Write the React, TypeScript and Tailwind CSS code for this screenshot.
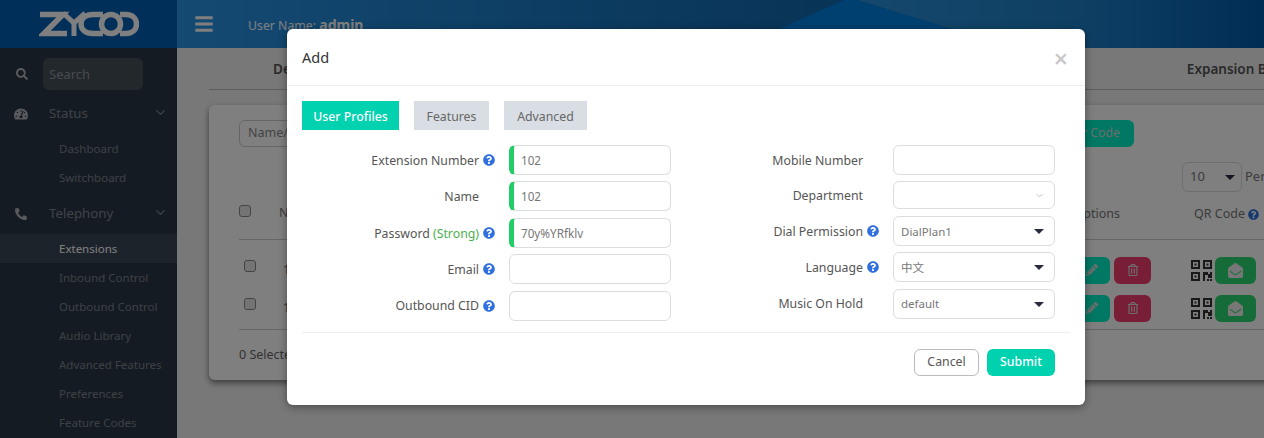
import React from "react";
import { ChevronDown } from "lucide-react";
import {
  FaBars,
  FaEnvelopeOpen,
  FaPencilAlt,
  FaPhone,
  FaQuestionCircle,
  FaRegTrashAlt,
  FaSearch,
  FaTachometerAlt,
} from "react-icons/fa";

const font = { fontFamily: '"Noto Sans", "Noto Sans CJK SC", sans-serif' };

function Logo() {
  return (
    <svg width="100" height="26" viewBox="0 0 100 26" fill="none" stroke="#fff" strokeWidth="5.500">
      <path d="M1 3.500H24L5 22.500H28" />
      <path d="M24 2L35 12L46 2M35 12V25" strokeWidth="5" />
      <path d="M64 3.500H54C47 3.500 42 7 42 13C42 19 47 22.500 54 22.500H64" />
      <circle cx="72" cy="13" r="9.500" />
      <path d="M81 3.500H87C94 3.500 97.500 8 97.500 13C97.500 18 94 22.500 87 22.500H81" />
    </svg>
  );
}

function QrIcon() {
  return (
    <svg width="21" height="21" viewBox="0 0 21 21" fill="#333">
      <path d="M0 0H9V9H0ZM2 2V7H7V2ZM3.500 3.500H5.500V5.500H3.500Z" fillRule="evenodd" />
      <path d="M12 0H21V9H12ZM14 2V7H19V2ZM15.500 3.500H17.500V5.500H15.500Z" fillRule="evenodd" />
      <path d="M0 12H9V21H0ZM2 14V19H7V14ZM3.500 15.500H5.500V17.500H3.500Z" fillRule="evenodd" />
      <path d="M12 12H17V14H19V12H21V18H17V15H14V21H12ZM16 19H18V21H16ZM19 19H21V21H19Z" />
    </svg>
  );
}

function HeaderDecoration() {
  return (
    <svg className="absolute top-0 left-0" width="1087" height="48" viewBox="0 0 1087 48">
      <defs>
        <linearGradient id="fade" x1="0" x2="1" y1="0" y2="0">
          <stop offset="0" stopColor="#2890d8" />
          <stop offset="0.55" stopColor="#1e80c8" />
          <stop offset="1" stopColor="#005aa8" />
        </linearGradient>
      </defs>
      <polygon points="680,0 1087,0 1087,48 836,48" fill="url(#fade)" />
      <polygon points="667,0 680,0 836,48 559,48" fill="#0080e0" />
    </svg>
  );
}

function SubItem({ label, active }: { label: string; active?: boolean }) {
  return (
    <div
      className={`flex h-[29px] items-center pl-[59px] text-[11.500px] ${
        active ? "bg-[#3a4656] text-white" : "text-[#7a838d]"
      }`}
    >
      {label}
    </div>
  );
}

function GroupItem({ icon, label }: { icon: React.ReactNode; label: string }) {
  return (
    <div className="flex h-[30px] items-center text-[13.300px] text-[#7f8790]">
      <span className="flex w-[49px] justify-center pr-[7px] text-[#b0b5bb]">{icon}</span>
      <span>{label}</span>
      <ChevronDown size={15} className="mt-[-4px] mr-[9px] ml-auto" />
    </div>
  );
}

function Sidebar() {
  return (
    <aside className="flex w-[177px] shrink-0 flex-col bg-[#2b3744]">
      <div className="flex h-12 items-center justify-center bg-[#0060b4]">
        <Logo />
      </div>
      <div className="mt-[10px] flex items-center">
        <span className="flex w-[43px] justify-center text-[#b0b5bb]">
          <FaSearch size={12} />
        </span>
        <div className="flex h-[32px] w-[100px] items-center rounded-md bg-[#47505a] pt-[1px] pl-[6px] text-[13px] text-[#8f97a1]">
          Search
        </div>
      </div>
      <div className="mt-[9px]">
        <GroupItem icon={<FaTachometerAlt size={14} />} label="Status" />
      </div>
      <div className="mt-[5px]">
        <SubItem label="Dashboard" />
        <SubItem label="Switchboard" />
      </div>
      <div className="mt-[7px]">
        <GroupItem icon={<FaPhone size={12} className="scale-x-[-1]" />} label="Telephony" />
      </div>
      <div className="mt-[5px]">
        <SubItem label="Extensions" active />
        <SubItem label="Inbound Control" />
        <SubItem label="Outbound Control" />
        <SubItem label="Audio Library" />
        <SubItem label="Advanced Features" />
        <SubItem label="Preferences" />
        <SubItem label="Feature Codes" />
      </div>
    </aside>
  );
}

function SelectArrow() {
  return (
    <svg width="10" height="5" viewBox="0 0 10 5" className="shrink-0">
      <polygon points="0,0 10,0 5,5" fill="#2b2b40" />
    </svg>
  );
}

function TableRow() {
  return (
    <div className="flex h-[38px] items-center">
      <span className="mb-[8px] ml-[5px] h-3 w-3 rounded-[3px] border border-[#888] bg-[#e8e8e8]" />
      <span className="ml-[27px] text-[12.500px] text-[#666]">102</span>
      <div className="mr-[23px] ml-auto flex items-center">
        <span className="flex h-[27px] w-[37px] items-center justify-center rounded-md bg-[#00f0c8] text-[#ddd]">
          <FaPencilAlt size={12} />
        </span>
        <span className="ml-[4px] flex h-[27px] w-[37px] items-center justify-center rounded-md bg-[#f03c6c] text-[#ddd]">
          <FaRegTrashAlt size={12} />
        </span>
        <span className="ml-[40px]">
          <QrIcon />
        </span>
        <span className="ml-[3px] flex h-[27px] w-[41px] items-center justify-center rounded-md bg-[#2cd870] text-[#eee]">
          <FaEnvelopeOpen size={15} />
        </span>
      </div>
    </div>
  );
}

function Background() {
  return (
    <main className="flex min-w-0 flex-1 flex-col bg-[#f1f1f1]">
      <header className="relative flex h-12 shrink-0 items-center bg-gradient-to-r from-[#2994e6] to-[#004c8a] text-white">
        <HeaderDecoration />
        <FaBars size={20} className="relative ml-[17px]" />
        <span className="relative ml-[34px] pt-[2px] text-[12.300px]">
          User Name: <b className="text-[14px]">admin</b>
        </span>
      </header>
      <div className="ml-[32px] flex h-[42px] w-[1100px] items-center justify-between border-b border-[#bbb] pt-[2px] pr-[12px] pl-[64px] text-[13.500px] font-semibold text-[#555]">
        <span>Department</span>
        <span>Expansion Board</span>
      </div>
      <section className="mt-[15px] ml-[32px] h-[275px] w-[1100px] rounded-md bg-white px-[30px] pt-[15px] shadow-[0_3px_6px_rgba(0,0,0,0.5)]">
        <div className="flex items-center justify-between">
          <div className="flex h-[27px] w-[200px] items-center rounded-md border border-[#ccc] pl-[8px] text-[12.500px] text-[#888]">
            Name/Number
          </div>
          <div className="mr-[145px] flex h-[27px] w-[120px] items-center justify-end rounded-md bg-[#00f0c8] pr-[14px] text-[12.300px] text-[#ddd]">
            User Code
          </div>
        </div>
        <div className="mt-[15px] flex h-[30px] items-center justify-end pr-[3px] text-[13px] text-[#777]">
          <div className="flex h-[30px] w-[60px] items-center justify-between rounded-md border border-[#ddd] pr-[6px] pl-[7px]">
            10
            <SelectArrow />
          </div>
          <span className="ml-[3px] w-[31px]">Per</span>
        </div>
        <div className="mt-[6px] flex h-[42px] items-center border-b border-[#ccc] pb-[10px] text-[12.500px] text-[#777]">
          <span className="mb-[6px] h-3 w-3 rounded-[3px] border border-[#888] bg-[#e8e8e8]" />
          <span className="ml-[28px]">Number</span>
          <span className="mt-[2px] mr-[74px] ml-auto">Options</span>
          <span className="mt-[2px] mr-[20px] flex items-center gap-[3px]">
            QR Code
            <FaQuestionCircle size={11} className="text-[#2f6fde]" />
          </span>
        </div>
        <div className="border-b border-[#ccc] pt-[11px] pb-[2px]">
          <TableRow />
          <TableRow />
        </div>
        <div className="mt-[16px] text-[12.500px] text-[#666]">0 Selected</div>
      </section>
    </main>
  );
}

function Help() {
  return <FaQuestionCircle size={12} className="text-[#2f6fde]" />;
}

function Field({
  label,
  help,
  children,
}: {
  label: React.ReactNode;
  help?: boolean;
  children: React.ReactNode;
}) {
  return (
    <div className="flex items-center">
      <div className="w-[177px] pt-[2px] text-right text-[12.300px] text-[#555]">{label}</div>
      <div className="flex w-[30px] pl-[4px]">{help && <Help />}</div>
      {children}
    </div>
  );
}

function TextBox({ value, valid }: { value?: string; valid?: boolean }) {
  return (
    <div
      className={`flex h-[30px] w-[162px] items-center rounded-md border border-[#ddd] pt-[1px] text-[11.700px] text-[#777] ${
        valid ? "border-l-[5px] border-l-[#22cc66] pl-[7px]" : "pl-[11px]"
      }`}
    >
      {value}
    </div>
  );
}

function SelectBox({ value }: { value: string }) {
  return (
    <div className="flex h-[30px] w-[162px] items-center justify-between rounded-md border border-[#ddd] pt-[1px] pr-[10px] pl-[7px] text-[11.500px] text-[#777]">
      {value}
      <SelectArrow />
    </div>
  );
}

function Tab({ label, active, width }: { label: string; active?: boolean; width: string }) {
  return (
    <div
      className={`flex h-[29px] items-center justify-center pt-[3px] text-[12.300px] ${width} ${
        active ? "bg-[#00d2b0] font-medium text-white" : "bg-[#d9dde4] text-[#666]"
      }`}
    >
      {label}
    </div>
  );
}

function AddModal() {
  return (
    <div className="absolute top-[29px] left-[287px] h-[376px] w-[798px] rounded-md bg-white shadow-[0_2px_8px_rgba(0,0,0,0.4)]">
      <div className="flex h-[57px] items-center justify-between border-b border-[#eee] pt-[1px] pr-[17px] pl-[15px]">
        <span className="text-[14.500px] text-[#333]">Add</span>
        <span className="mt-[2px] text-[25px] leading-none font-semibold text-[#c8c8c8]">×</span>
      </div>
      <div className="px-[15px] pt-[15px]">
        <div className="flex gap-[15px]">
          <Tab label="User Profiles" active width="w-[97px]" />
          <Tab label="Features" width="w-[75px]" />
          <Tab label="Advanced" width="w-[83px]" />
        </div>
        <div className="mt-[15px] flex gap-[15px]">
          <div className="flex flex-col gap-[6.400px]">
            <Field label="Extension Number" help>
              <TextBox value="102" valid />
            </Field>
            <Field label="Name">
              <TextBox value="102" valid />
            </Field>
            <Field
              label={
                <>
                  Password <span className="text-[#4caf50]">(Strong)</span>
                </>
              }
              help
            >
              <TextBox value="70y%YRfklv" valid />
            </Field>
            <Field label="Email" help>
              <TextBox />
            </Field>
            <Field label="Outbound CID" help>
              <TextBox />
            </Field>
          </div>
          <div className="flex flex-col gap-[6.400px]">
            <Field label="Mobile Number">
              <TextBox />
            </Field>
            <Field label="Department">
              <div className="flex h-[28px] w-[162px] items-center justify-end rounded-md border border-[#ddd] pr-[9px] text-[#bbb]">
                <ChevronDown size={11} />
              </div>
            </Field>
            <Field label="Dial Permission" help>
              <SelectBox value="DialPlan1" />
            </Field>
            <Field label="Language" help>
              <SelectBox value="中文" />
            </Field>
            <Field label="Music On Hold">
              <SelectBox value="default" />
            </Field>
          </div>
        </div>
        <div className="mt-[11px] flex h-[44px] items-end justify-end border-t border-[#eee] pr-[15px]">
          <button className="h-[27px] w-[65px] rounded-md border border-[#bbb] bg-white pt-[1px] text-[12.300px] text-[#555]">
            Cancel
          </button>
          <button className="ml-[8px] h-[27px] w-[68px] rounded-md bg-[#00d2b0] pt-[1px] text-[12.300px] font-medium text-white">
            Submit
          </button>
        </div>
      </div>
    </div>
  );
}

export default function App() {
  return (
    <div className="relative flex h-[438px] w-[1264px] overflow-hidden" style={font}>
      <Sidebar />
      <Background />
      <div className="absolute inset-0 bg-black/50" />
      <AddModal />
    </div>
  );
}
